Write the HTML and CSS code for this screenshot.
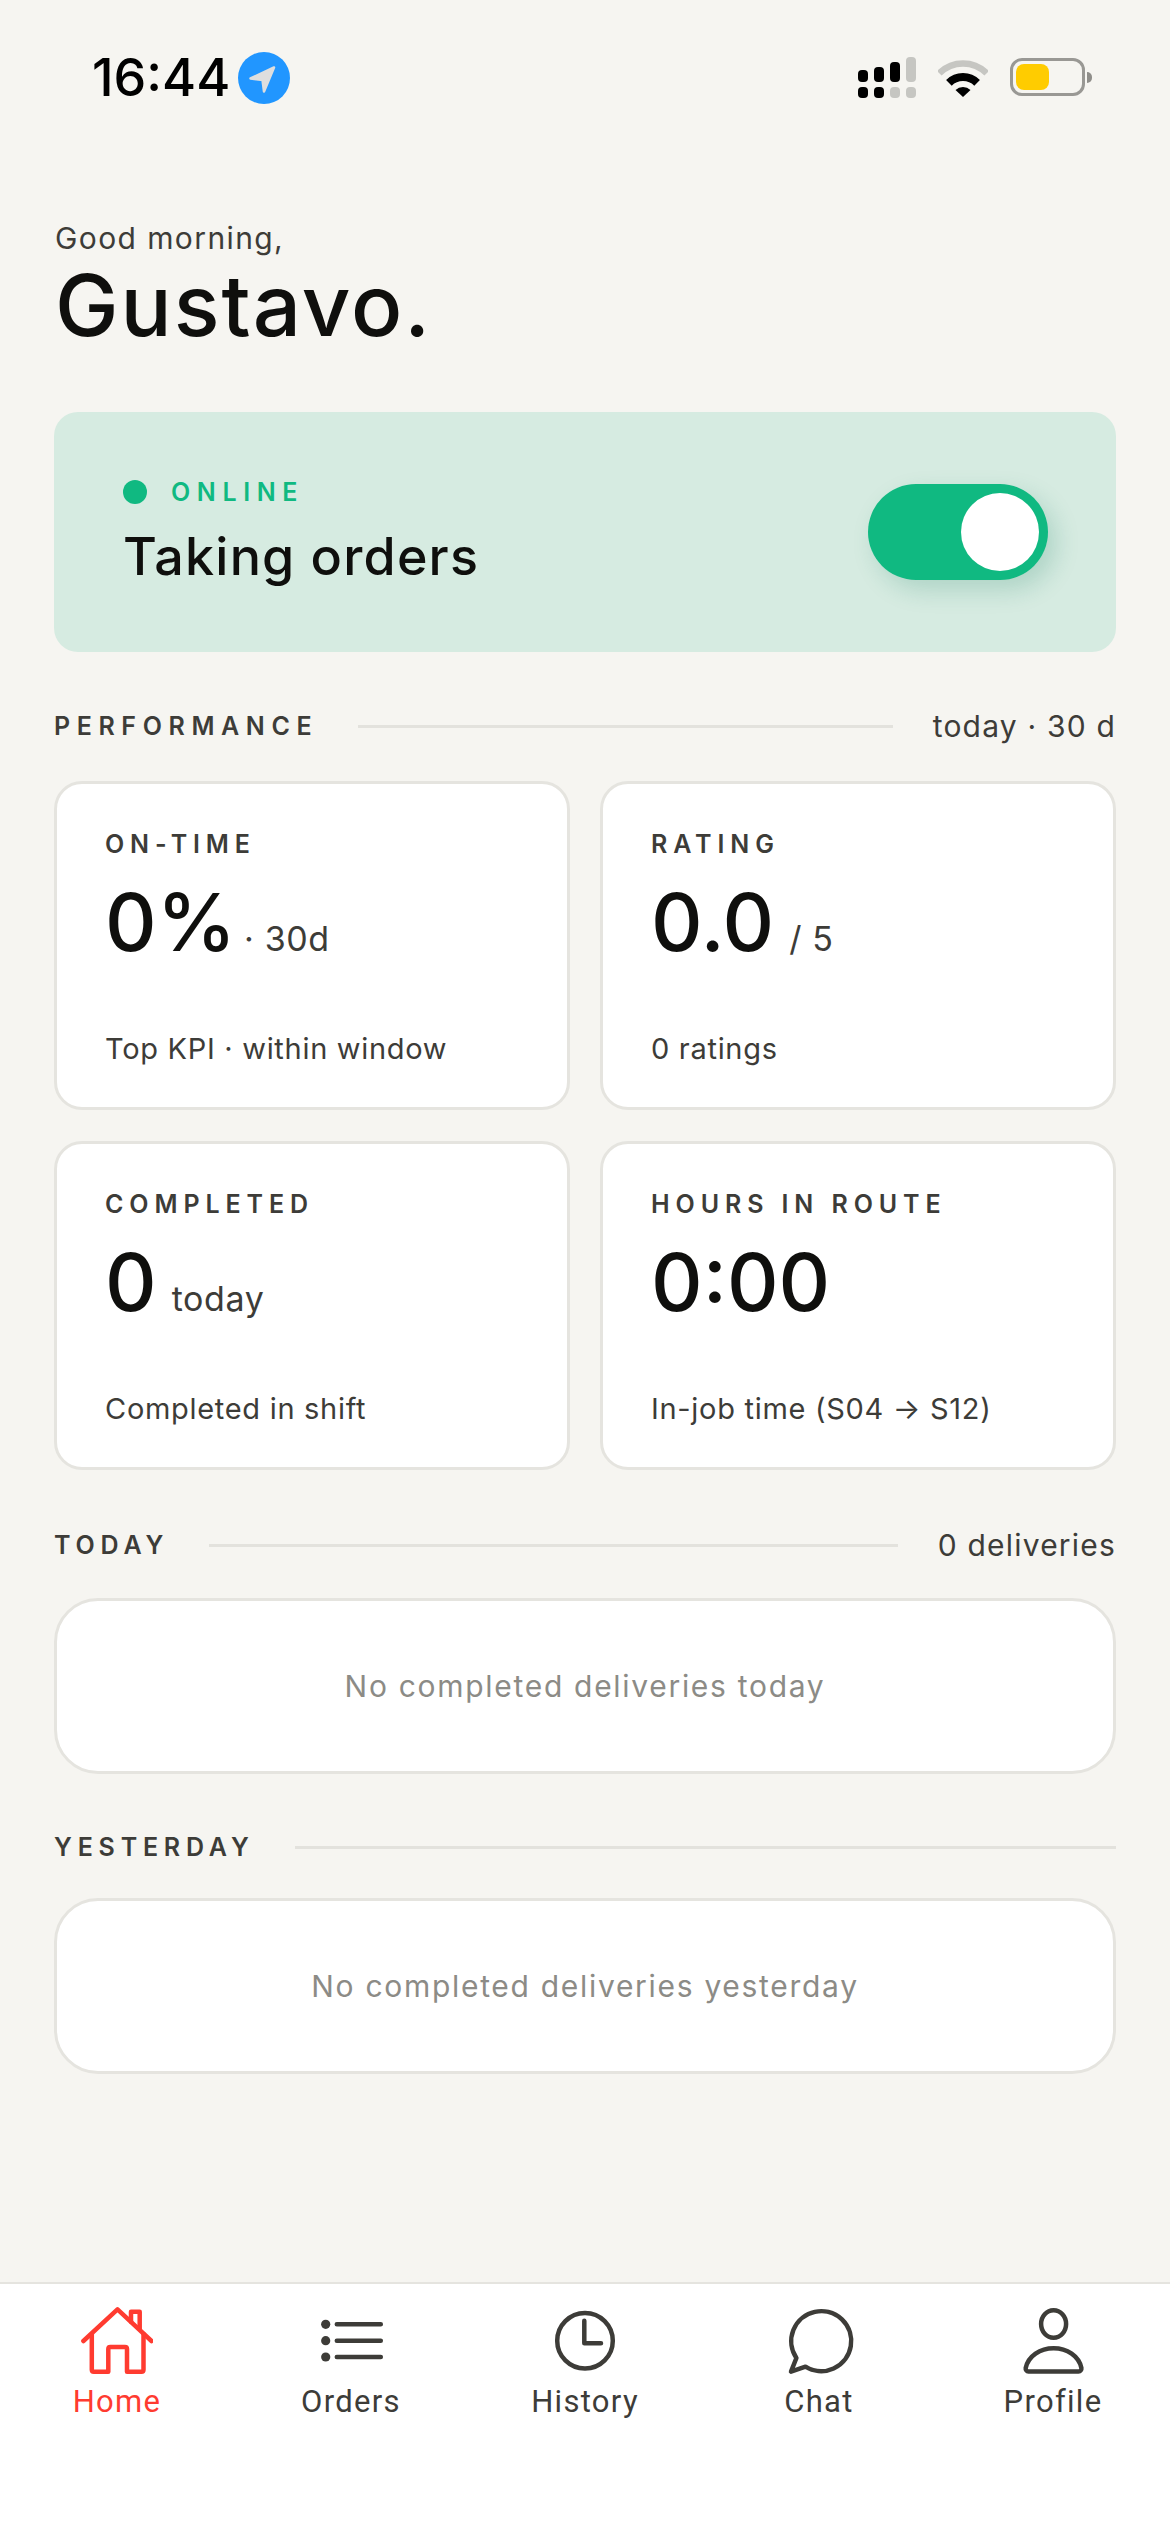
FILE: index.html
```html
<!DOCTYPE html>
<html lang="en">
<head>
    <meta charset="UTF-8">
    <meta name="viewport" content="width=device-width, initial-scale=1.0">
    <title>Home</title>
    <link rel="stylesheet" href="styles.css">
</head>
<body>
    <div class="app">
        <div class="status-bar">
            <div class="status-left">
                <span class="clock">16:44</span>
                <svg class="loc-icon" viewBox="0 0 52 52" width="52" height="52">
                    <circle cx="26" cy="26" r="26" fill="#2196ff"/>
                    <path d="M36 15.5 L12.5 26.5 L24.5 28 L26 39.5 Z" fill="#dedede" stroke="#dedede" stroke-width="2.5" stroke-linejoin="round"/>
                </svg>
            </div>
            <div class="status-right">
                <div class="signal">
                    <div class="signal-col"><span class="bar on bar-1"></span><span class="dot on"></span></div>
                    <div class="signal-col"><span class="bar on bar-2"></span><span class="dot on"></span></div>
                    <div class="signal-col"><span class="bar on bar-3"></span><span class="dot"></span></div>
                    <div class="signal-col"><span class="bar bar-4"></span><span class="dot"></span></div>
                </div>
                <svg class="wifi" viewBox="0 0 50 38" width="50" height="38" fill="none">
                    <path d="M1.3 14.3 A33.5 33.5 0 0 1 48.7 14.3" stroke="#c6c6c2" stroke-width="6.5"/>
                    <path d="M10.9 23.9 A20 20 0 0 1 39.1 23.9" stroke="#000" stroke-width="8"/>
                    <path d="M25 38 L17.5 31 A11 11 0 0 1 32.5 31 Z" fill="#000"/>
                </svg>
                <div class="battery">
                    <div class="battery-body"><div class="battery-level"></div></div>
                    <div class="battery-nub"></div>
                </div>
            </div>
        </div>

        <div class="content">
            <div class="greeting">
                <p class="hello">Good morning,</p>
                <h1 class="name">Gustavo.</h1>
            </div>

            <div class="online-card">
                <div class="online-text">
                    <div class="online-status"><span class="online-dot"></span><span class="online-label">ONLINE</span></div>
                    <div class="online-title">Taking orders</div>
                </div>
                <div class="toggle"><div class="toggle-knob"></div></div>
            </div>

            <div class="section-head head-performance">
                <span class="section-title">PERFORMANCE</span>
                <span class="section-line"></span>
                <span class="section-note">today · 30 d</span>
            </div>

            <div class="kpi-grid">
                <div class="kpi-card">
                    <div class="kpi-label">ON-TIME</div>
                    <div class="kpi-value">0%<span class="kpi-unit unit-dot">· 30d</span></div>
                    <div class="kpi-foot">Top KPI · within window</div>
                </div>
                <div class="kpi-card">
                    <div class="kpi-label">RATING</div>
                    <div class="kpi-value">0.0<span class="kpi-unit">/ 5</span></div>
                    <div class="kpi-foot">0 ratings</div>
                </div>
                <div class="kpi-card">
                    <div class="kpi-label">COMPLETED</div>
                    <div class="kpi-value">0<span class="kpi-unit">today</span></div>
                    <div class="kpi-foot">Completed in shift</div>
                </div>
                <div class="kpi-card">
                    <div class="kpi-label">HOURS IN ROUTE</div>
                    <div class="kpi-value">0:00</div>
                    <div class="kpi-foot">In-job time (S04 → S12)</div>
                </div>
            </div>

            <div class="section-head head-today">
                <span class="section-title">TODAY</span>
                <span class="section-line"></span>
                <span class="section-note">0 deliveries</span>
            </div>
            <div class="empty-card">No completed deliveries today</div>

            <div class="section-head head-yesterday">
                <span class="section-title">YESTERDAY</span>
                <span class="section-line"></span>
            </div>
            <div class="empty-card">No completed deliveries yesterday</div>
        </div>

        <div class="tab-bar">
            <div class="tab active">
                <svg viewBox="0 0 72 72" width="72" height="72" fill="none" stroke="currentColor" stroke-width="4.5" stroke-linecap="round" stroke-linejoin="round">
                    <path d="M2.4 35 L36.5 3.3 L70.5 35"/>
                    <path d="M10.8 28 V63.7 Q10.8 65.7 12.8 65.7 H27.3 V43 Q27.3 41 29.3 41 H44 Q46 41 46 43 V65.7 H60.5 Q62.5 65.7 62.5 63.7 V28"/>
                    <path d="M50 15.7 V5.7 H58.7 V23"/>
                </svg>
                <span>Home</span>
            </div>
            <div class="tab">
                <svg viewBox="0 0 72 72" width="72" height="72" fill="none" stroke="currentColor" stroke-width="4.5" stroke-linecap="round">
                    <circle cx="10.7" cy="18.3" r="4.6" fill="currentColor" stroke="none"/>
                    <circle cx="10.7" cy="34.7" r="4.6" fill="currentColor" stroke="none"/>
                    <circle cx="10.7" cy="51" r="4.6" fill="currentColor" stroke="none"/>
                    <path d="M21.8 18.3 H65.8 M21.8 34.7 H65.8 M21.8 51 H65.8"/>
                </svg>
                <span>Orders</span>
            </div>
            <div class="tab">
                <svg viewBox="0 0 72 72" width="72" height="72" fill="none" stroke="currentColor" stroke-width="4.5" stroke-linecap="round" stroke-linejoin="round">
                    <circle cx="36" cy="34.7" r="27.8"/>
                    <path d="M35.3 14.7 V37.3 H52"/>
                </svg>
                <span>History</span>
            </div>
            <div class="tab">
                <svg viewBox="0 0 72 72" width="72" height="72" fill="none" stroke="currentColor" stroke-width="4.5" stroke-linecap="round" stroke-linejoin="round">
                    <path d="M13.4 52 L8 65.7 L22.5 60.7 A30 30 0 1 0 13.4 52 Z"/>
                </svg>
                <span>Chat</span>
            </div>
            <div class="tab">
                <svg viewBox="0 0 72 72" width="72" height="72" fill="none" stroke="currentColor" stroke-width="4.5" stroke-linecap="round" stroke-linejoin="round">
                    <ellipse cx="36.6" cy="18" rx="12.5" ry="13.7"/>
                    <path d="M11.5 65.5 H61.5 A3 3 0 0 0 64.4 62 C62 50 50 42.2 36.6 42.2 S11.2 50 8.7 62 A3 3 0 0 0 11.5 65.5 Z"/>
                </svg>
                <span>Profile</span>
            </div>
        </div>
    </div>
</body>
</html>
```

FILE: styles.css
```css
* {
    margin: 0;
    padding: 0;
    box-sizing: border-box;
}

body {
    font-family: 'Inter', 'Liberation Sans', sans-serif;
    background: #f6f5f1;
    color: #0f0f0d;
}

.app {
    width: 1170px;
    height: 2532px;
    display: flex;
    flex-direction: column;
    overflow: hidden;
}

/* status bar */
.status-bar {
    height: 156px;
    padding: 52px 78px 0 92px;
    display: flex;
    justify-content: space-between;
    align-items: flex-start;
}

.status-left {
    display: flex;
    align-items: center;
    gap: 8px;
}

.clock {
    font-size: 52px;
    line-height: 52px;
    font-weight: 500;
    color: #000;
}

.status-right {
    display: flex;
    align-items: flex-start;
    gap: 22px;
    padding-top: 5px;
}

.signal {
    display: flex;
    gap: 6px;
}

.signal-col {
    display: flex;
    flex-direction: column;
    justify-content: flex-end;
    align-items: center;
    gap: 5px;
    height: 41px;
}

.bar, .dot {
    width: 10px;
    background: #c6c6c2;
    border-radius: 4px;
}

.bar.on, .dot.on {
    background: #000;
}

.dot { height: 11px; }
.bar-1 { height: 12px; }
.bar-2 { height: 15px; }
.bar-3 { height: 20px; }
.bar-4 { height: 25px; }

.wifi {
    margin-top: 2px;
}

.battery {
    display: flex;
    align-items: center;
    gap: 2px;
    height: 38px;
    margin-top: 1px;
}

.battery-body {
    width: 75px;
    height: 38px;
    border: 3px solid #999894;
    border-radius: 12px;
    padding: 3px;
}

.battery-level {
    width: 33px;
    height: 100%;
    background: #ffcc00;
    border-radius: 8px;
}

.battery-nub {
    width: 5px;
    height: 11px;
    background: #8f8e8a;
    border-radius: 0 6px 6px 0;
}

/* content */
.content {
    flex: 1;
    padding: 0 54px;
}

.greeting {
    height: 256px;
    padding-top: 56px;
}

.hello {
    font-size: 30px;
    line-height: 52px;
    padding-left: 1px;
    letter-spacing: 1.4px;
    color: #3d3c38;
}

.name {
    font-size: 85px;
    line-height: 96px;
    font-weight: 500;
    letter-spacing: 2px;
    margin-top: -6px;
    padding-left: 1px;
}

.online-card {
    height: 240px;
    background: #d6ebe1;
    border-radius: 24px;
    padding: 0 68px 0 69px;
    display: flex;
    align-items: center;
    justify-content: space-between;
}

.online-status {
    display: flex;
    align-items: center;
    gap: 24px;
    height: 30px;
}

.online-dot {
    width: 24px;
    height: 24px;
    border-radius: 50%;
    background: #10b981;
}

.online-label {
    font-size: 25px;
    font-weight: 600;
    letter-spacing: 6.6px;
    color: #10b981;
}

.online-title {
    font-size: 52px;
    line-height: 60px;
    font-weight: 500;
    letter-spacing: 1.2px;
    margin-top: 20px;
}

.toggle {
    width: 180px;
    height: 96px;
    padding: 9px;
    border-radius: 48px;
    background: #10b981;
    display: flex;
    justify-content: flex-end;
    box-shadow: 8px 10px 24px rgba(16, 120, 90, 0.2);
}

.toggle-knob {
    width: 78px;
    height: 78px;
    border-radius: 50%;
    background: #fff;
}

/* section headers */
.section-head {
    display: flex;
    align-items: center;
    gap: 40px;
    height: 40px;
}

.head-performance { margin-top: 54px; margin-bottom: 35px; }
.head-today { margin-top: 55px; margin-bottom: 33px; }
.head-yesterday { margin-top: 53px; margin-bottom: 31px; }

.section-title {
    font-size: 25px;
    font-weight: 600;
    letter-spacing: 5.8px;
    color: #3d3c38;
}

.head-performance .section-title {
    letter-spacing: 6.6px;
}

.section-line {
    flex: 1;
    height: 3px;
    background: #e3e2dd;
}

.section-note {
    font-size: 30px;
    letter-spacing: 1.2px;
    color: #3d3c38;
}

/* kpi cards */
.kpi-grid {
    display: grid;
    grid-template-columns: 516px 516px;
    grid-auto-rows: 329px;
    gap: 31px 30px;
}

.kpi-card {
    background: #fff;
    border: 3px solid #e5e4df;
    border-radius: 28px;
    padding: 45px 48px 0;
    display: flex;
    flex-direction: column;
}

.kpi-label {
    font-size: 25px;
    line-height: 30px;
    font-weight: 600;
    letter-spacing: 5.9px;
    color: #3d3c38;
}

.kpi-value {
    font-size: 80px;
    line-height: 90px;
    font-weight: 500;
    margin-top: 18px;
}

.kpi-unit {
    font-size: 34px;
    font-weight: 400;
    letter-spacing: 0.6px;
    color: #3d3c38;
    margin-left: 15px;
}

.kpi-unit.unit-dot {
    margin-left: 8px;
}

.kpi-foot {
    font-size: 29px;
    line-height: 36px;
    letter-spacing: 0.7px;
    color: #3d3c38;
    margin-top: auto;
    margin-bottom: 40px;
}

/* empty day cards */
.empty-card {
    height: 176px;
    background: #fff;
    border: 3px solid #e5e4df;
    border-radius: 44px;
    display: flex;
    align-items: center;
    justify-content: center;
    font-size: 30px;
    letter-spacing: 1.7px;
    color: #8c8b86;
}

/* bottom tabs */
.tab-bar {
    height: 250px;
    background: #fff;
    border-top: 2px solid #e5e4df;
    display: grid;
    grid-template-columns: repeat(5, 234px);
    padding-top: 22px;
}

.tab {
    display: flex;
    flex-direction: column;
    align-items: center;
    color: #3d3c38;
    font-size: 31px;
    line-height: 36px;
    font-family: 'Roboto', 'Inter', sans-serif;
    letter-spacing: 1.3px;
}

.tab span {
    margin-top: 6px;
}

.tab.active {
    color: #ff3b30;
}
```
